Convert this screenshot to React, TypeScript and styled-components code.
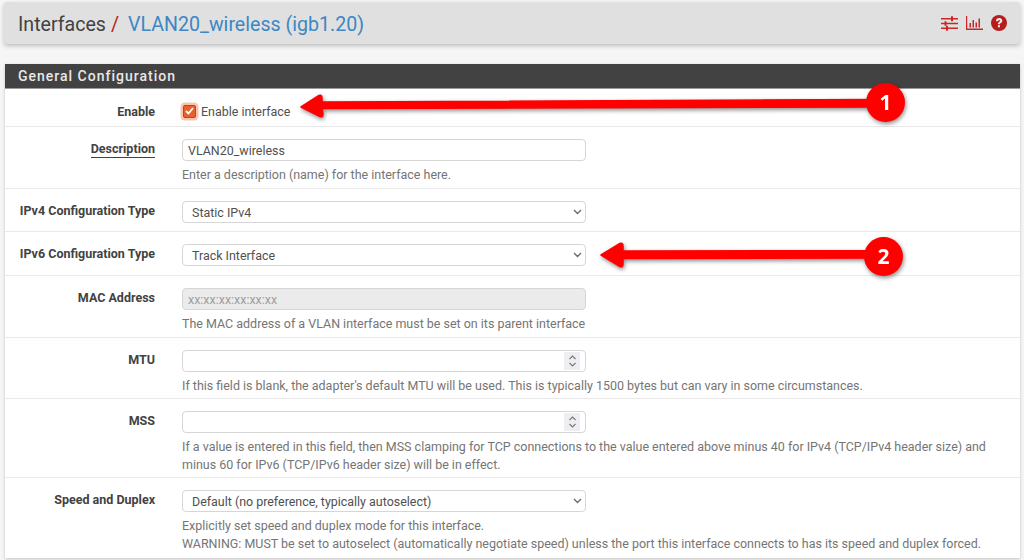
import React from "react";
import styled, { createGlobalStyle } from "styled-components";

const Global = createGlobalStyle`
  html, body { margin: 0; padding: 0; background: #f5f5f5; overflow: hidden; }
  body { font-family: Roboto, "Liberation Sans", sans-serif; color: #424242; }
`;
const Page = styled.div`
  position: relative;
  width: 1024px;
  height: 560px;
  padding: 2px 4px 0 5px;
  box-sizing: border-box;
  overflow: hidden;
`;
const Header = styled.header`
  height: 42px;
  margin-left: -1px;
  background: #e0e0e0;
  border-radius: 3px;
  box-shadow: 0 2px 4px rgba(0, 0, 0, 0.22);
  display: flex;
  align-items: center;
  justify-content: space-between;
  padding: 0 13px 0 14px;
`;
const Crumbs = styled.h1`
  margin: 4px 0 0;
  font-size: 19.6px;
  font-weight: 400;
  line-height: 42px;
  color: #424242;
  white-space: nowrap;
`;
const Slash = styled.span`
  color: #b71c1c;
  margin: 0 9px 0 5px;
`;
const Current = styled.span`
  color: #3c87c4;
`;
const Tools = styled.div`
  display: flex;
  align-items: center;
  gap: 8px;
  color: #c62828;
`;
const Panel = styled.section`
  margin-top: 20px;
  background: #fff;
  box-shadow: 0 1px 3px rgba(0, 0, 0, 0.2);
`;
const Heading = styled.h2`
  margin: 0;
  height: 24px;
  background: #424242;
  color: #e8e8e8;
  font-size: 14px;
  font-weight: 500;
  letter-spacing: 1px;
  line-height: 24px;
  padding-left: 13px;
  border-bottom: 1px solid #9a9a9a;
`;
const Row = styled.div<{ $h: number }>`
  display: grid;
  grid-template-columns: 150px 1fr;
  column-gap: 27px;
  height: ${(p) => p.$h}px;
  box-sizing: border-box;
  padding-top: 12px;
  border-bottom: 1px solid #e9e9e9;
  &:last-child { border-bottom: 0; }
`;
const Label = styled.div<{ $drop?: number }>`
  margin-top: ${(p) => p.$drop ?? 1}px;
  text-align: right;
  font-size: 12.5px;
  font-weight: 700;
  line-height: 18px;
  color: #424242;
  white-space: nowrap;
`;
const LinkLabel = styled.span`
  border-bottom: 1px solid #424242;
  padding-bottom: 1px;
`;
const Field = styled.div`
  min-width: 0;
`;
const Control = styled.div<{ $disabled?: boolean; $pad?: number }>`
  width: 404px;
  height: 22px;
  box-sizing: border-box;
  border: 1px solid #d6d6d6;
  border-radius: 4px;
  background: ${(p) => (p.$disabled ? "#ebebeb" : "#fff")};
  display: flex;
  align-items: center;
  justify-content: space-between;
  padding: 0 6px 0 ${(p) => p.$pad ?? 5}px;
  font-size: 12.45px;
  color: ${(p) => (p.$disabled ? "#9e9e9e" : "#505050")};
`;
const Help = styled.div`
  margin-top: 5px;
  font-size: 12.47px;
  line-height: 18px;
  color: #757575;
  white-space: nowrap;
`;
const CheckLine = styled.div`
  display: flex;
  align-items: center;
  gap: 5px;
  height: 20px;
  font-size: 12.45px;
  color: #505050;
`;
const Check = styled.span`
  width: 13px;
  height: 13px;
  margin-left: 1px;
  border-radius: 2px;
  background: #e8602c;
  border: 1px solid #b8481e;
  box-sizing: border-box;
  box-shadow: 0 0 0 2.5px #f9c3ac;
  display: flex;
  align-items: center;
  justify-content: center;
`;
const Spinner = styled.span`
  width: 16px;
  height: 18px;
  margin-right: -1px;
  background: #eeeef2;
  display: flex;
  align-items: center;
  justify-content: center;
`;
const ChevronSvg = styled.svg`
  margin-right: -3px;
`;
const Callout = styled.div<{ $x: number; $y: number; $w: number }>`
  position: absolute;
  left: ${(p) => p.$x}px;
  top: ${(p) => p.$y}px;
  width: ${(p) => p.$w}px;
  height: 40px;
  filter: drop-shadow(1px 2px 2px rgba(0, 0, 0, 0.45));
`;
const ArrowSvg = styled.svg`
  display: block;
  position: absolute;
  inset: 0;
`;
const Badge = styled.span`
  position: absolute;
  right: 0;
  top: 0;
  width: 39px;
  height: 39px;
  border-radius: 50%;
  background: #ff0000;
  color: #fff;
  font-family: "Open Sans", "DejaVu Sans", sans-serif;
  font-size: 21px;
  font-weight: 700;
  line-height: 39px;
  text-align: center;
`;

const Chevron = () => (
  <ChevronSvg width="9" height="6" viewBox="0 0 9 6" fill="none">
    <path d="M1 1l3.500 3.500L8 1" stroke="#6a6a6a" strokeWidth="1.400" />
  </ChevronSvg>
);
const Spin = () => (
  <Spinner>
    <svg width="9" height="14" viewBox="0 0 9 14" fill="none">
      <path d="M1.500 5L4.500 2l3 3M1.500 9l3 3 3-3" stroke="#777" strokeWidth="1.100" />
    </svg>
  </Spinner>
);
const Arrow = ({ w, d }: { w: number; d: string }) => (
  <ArrowSvg width={w} height={40} viewBox={`0 0 ${w} 40`}>
    <path d={d} fill="#ff0000" stroke="#ff0000" strokeWidth="1.500" strokeLinejoin="round" />
  </ArrowSvg>
);

const Sliders = () => (
  <svg width="17" height="15" viewBox="0 0 17 15" fill="currentColor">
    <path d="M0 2h10V.3h2V2h5v1.600h-5v1.700h-2V3.600H0zM0 6.700h3.500V5.300h2v1.400H17v1.600H5.500v1.400h-2V8.300H0zM0 11.400h5V9.800h2v1.600h10V13H7v1.700H5V13H0z" />
  </svg>
);
const Chart = () => (
  <svg width="17" height="14" viewBox="0 0 17 14" fill="currentColor">
    <path d="M0 0h1.200v12.600H17V14H0zM3.500 7h1.500v4.500H3.500zM6.500 4h1.500v7.500H6.500zM9.500 6.500h1.500v5H9.500zM12.500 2.500h1.500v9h-1.500z" />
  </svg>
);
const HelpIcon = () => (
  <svg width="16" height="16" viewBox="0 0 16 16">
    <circle cx="8" cy="8" r="8" fill="#b71c1c" />
    <path d="M4.900 6.200C5 4.300 6.400 3.100 8.200 3.100c1.800 0 3.100 1.100 3.100 2.600 0 1.200-.7 1.800-1.500 2.300-.6.400-.8.700-.8 1.300H6.900c0-1.200.3-1.800 1.200-2.400.5-.4.900-.6.900-1.100 0-.4-.3-.7-.8-.7-.6 0-1 .4-1.100 1.100z" fill="#f0e6e6" />
    <rect x="6.900" y="10.200" width="2.100" height="2.100" fill="#f0e6e6" />
  </svg>
);

export default function App() {
  return (
    <Page>
      <Global />
      <Header>
        <Crumbs>
          Interfaces<Slash>/</Slash>
          <Current>VLAN20_wireless (igb1.20)</Current>
        </Crumbs>
        <Tools>
          <Sliders />
          <Chart />
          <HelpIcon />
        </Tools>
      </Header>
      <Panel>
        <Heading>General Configuration</Heading>
        <Row $h={38}>
          <Label $drop={2}>Enable</Label>
          <Field>
            <CheckLine>
              <Check>
                <svg width="9" height="8" viewBox="0 0 9 8" fill="none">
                  <path d="M1 4l2.500 2.500L8 1" stroke="#fff" strokeWidth="1.800" />
                </svg>
              </Check>
              Enable interface
            </CheckLine>
          </Field>
        </Row>
        <Row $h={62}>
          <Label>
            <LinkLabel>Description</LinkLabel>
          </Label>
          <Field>
            <Control>VLAN20_wireless</Control>
            <Help>Enter a description (name) for the interface here.</Help>
          </Field>
        </Row>
        <Row $h={43}>
          <Label>IPv4 Configuration Type</Label>
          <Field>
            <Control $pad={9}>
              Static IPv4
              <Chevron />
            </Control>
          </Field>
        </Row>
        <Row $h={44}>
          <Label>IPv6 Configuration Type</Label>
          <Field>
            <Control $pad={9}>
              Track Interface
              <Chevron />
            </Control>
          </Field>
        </Row>
        <Row $h={62}>
          <Label>MAC Address</Label>
          <Field>
            <Control $disabled>xx:xx:xx:xx:xx:xx</Control>
            <Help>The MAC address of a VLAN interface must be set on its parent interface</Help>
          </Field>
        </Row>
        <Row $h={61}>
          <Label>MTU</Label>
          <Field>
            <Control>
              <span />
              <Spin />
            </Control>
            <Help>
              If this field is blank, the adapter's default MTU will be used. This is typically 1500 bytes but can vary in some circumstances.
            </Help>
          </Field>
        </Row>
        <Row $h={79}>
          <Label>MSS</Label>
          <Field>
            <Control>
              <span />
              <Spin />
            </Control>
            <Help>
              If a value is entered in this field, then MSS clamping for TCP connections to the value entered above minus 40 for IPv4 (TCP/IPv4 header size) and
              <br />
              minus 60 for IPv6 (TCP/IPv6 header size) will be in effect.
            </Help>
          </Field>
        </Row>
        <Row $h={80}>
          <Label>Speed and Duplex</Label>
          <Field>
            <Control $pad={9}>
              Default (no preference, typically autoselect)
              <Chevron />
            </Control>
            <Help>
              Explicitly set speed and duplex mode for this interface.
              <br />
              WARNING: MUST be set to autoselect (automatically negotiate speed) unless the port this interface connects to has its speed and duplex forced.
            </Help>
          </Field>
        </Row>
      </Panel>
      <Callout $x={300} $y={83} $w={605}>
        <Arrow w={605} d="M1 24 L19 12.500 Q22 11.500 22 15 L22 19 L585 16.500 L585 24 L22 25.500 L23 31 Q23 34.500 20 33.500 Z" />
        <Badge>1</Badge>
      </Callout>
      <Callout $x={600} $y={237} $w={303}>
        <Arrow w={303} d="M1 18 L20 6.500 Q23 5.500 23 9 L23 14 L283 13.700 L283 21 L23 21.500 L23 27 Q23 30.500 20 29.500 Z" />
        <Badge>2</Badge>
      </Callout>
    </Page>
  );
}
